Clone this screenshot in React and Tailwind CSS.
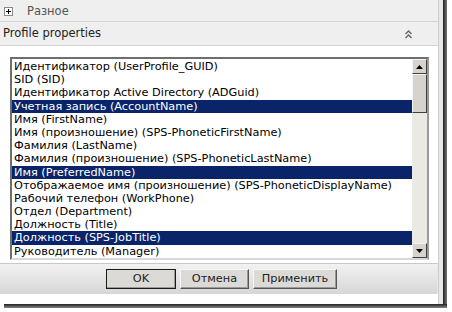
import React from 'react';

const items = [
    { label: 'Идентификатор (UserProfile_GUID)' },
    { label: 'SID (SID)' },
    { label: 'Идентификатор Active Directory (ADGuid)' },
    { label: 'Учетная запись (AccountName)', selected: true },
    { label: 'Имя (FirstName)' },
    { label: 'Имя (произношение) (SPS-PhoneticFirstName)' },
    { label: 'Фамилия (LastName)' },
    { label: 'Фамилия (произношение) (SPS-PhoneticLastName)' },
    { label: 'Имя (PreferredName)', selected: true },
    { label: 'Отображаемое имя (произношение) (SPS-PhoneticDisplayName)' },
    { label: 'Рабочий телефон (WorkPhone)' },
    { label: 'Отдел (Department)' },
    { label: 'Должность (Title)' },
    { label: 'Должность (SPS-JobTitle)', selected: true },
    { label: 'Руководитель (Manager)' },
];

const font = { fontFamily: '"DejaVu Sans", Verdana, sans-serif' };

const ScrollButton = ({ up }) => (
    <div className="w-[15px] h-[15px] bg-[#d6d3ce] border border-t-[#f4f4f4] border-l-[#f4f4f4] border-b-[#404040] border-r-[#404040] flex items-center justify-center">
        <svg width="7" height="4" viewBox="0 0 7 4">
            {up ? <path d="M3.5 0 L7 4 L0 4 Z" fill="#000" /> : <path d="M0 0 L7 0 L3.5 4 Z" fill="#000" />}
        </svg>
    </div>
);

const Btn = ({ children, primary, width }) => (
    <button
        className={`h-[20px] ${width} text-[11.3px] text-[#222] bg-[#dcdad6] border ${primary ? 'border-[#1a1a1a]' : 'border-t-[#f8f8f8] border-l-[#f8f8f8] border-b-[#555] border-r-[#555]'} shadow-[inset_-1px_-1px_0_#9a9a9a]`}
        style={font}
    >
        {children}
    </button>
);

export default function App() {
    return (
        <div className="w-[452px] h-[312px] bg-white overflow-hidden flex flex-col" style={font}>
            <div className="flex h-[304px]">
                <div className="w-[438px] flex flex-col bg-white">
                    {/* Разное */}
                    <div className="h-[22px] bg-[#efefef] border-b border-[#d4d4d4] flex items-center pl-[4px] pt-[2px]">
                        <div className="w-[9px] h-[9px] border border-[#888] bg-white flex items-center justify-center">
                            <svg width="5" height="5" viewBox="0 0 5 5"><path d="M0 2.5 H5 M2.5 0 V5" stroke="#000" strokeWidth="1" /></svg>
                        </div>
                        <span className="ml-[14px] text-[11.5px] text-[#555]">Разное</span>
                    </div>
                    {/* Profile properties */}
                    <div className="h-[24px] bg-[#efefef] border-b border-[#d4d4d4] flex items-center justify-between pl-[3px] pr-[26px] pt-[1px]">
                        <span className="text-[11.5px] text-[#222]">Profile properties</span>
                        <svg width="7" height="9" viewBox="0 0 7 9">
                            <path d="M0.5 4 L3.5 1 L6.5 4 M0.5 8 L3.5 5 L6.5 8" stroke="#666" strokeWidth="1.4" fill="none" />
                        </svg>
                    </div>
                    {/* list */}
                    <div className="pt-[11px] pl-[10px] pr-[9px]">
                        <div className="h-[203px] border-2 border-t-[#6e6e6e] border-l-[#6e6e6e] border-b-[#d8d8d8] border-r-[#9a9a9a] flex bg-white">
                            <div className="flex-1 pt-[1px] overflow-hidden">
                                {items.map((it, i) => (
                                    <div
                                        key={i}
                                        className={`h-[13.2px] leading-[13.2px] text-[11.3px] pl-[2px] whitespace-nowrap ${it.selected ? 'bg-[#0a246a] text-white' : 'text-black'}`}
                                    >
                                        {it.label}
                                    </div>
                                ))}
                            </div>
                            <div className="w-[15px] flex flex-col bg-[#ebe9e4]">
                                <ScrollButton up />
                                <div className="h-[39px] bg-[#d6d3ce] border border-t-[#f4f4f4] border-l-[#f4f4f4] border-b-[#404040] border-r-[#404040]" />
                                <div className="flex-1" />
                                <ScrollButton />
                            </div>
                        </div>
                    </div>
                    {/* buttons */}
                    <div className="h-[31px] mt-[3px] bg-gradient-to-b from-[#f2f2f2] to-[#d6d6d6] border-t border-[#c8c8c8] border-r border-r-[#e8e8e8] flex items-center pl-[106px] gap-[4px]">
                        <Btn primary width="w-[70px]">OK</Btn>
                        <Btn width="w-[69px]">Отмена</Btn>
                        <Btn width="w-[84px]">Применить</Btn>
                    </div>
                    <div className="flex-1" />
                </div>
                <div className="w-[5px] bg-[#e6e6e6] border-l border-[#cfcfcf]" />
                <div className="w-[4px] bg-gradient-to-r from-[#222] to-[#777]" />
                <div className="flex-1 bg-white" />
            </div>
            <div className="h-[4px] ml-[4px] mr-[5px] bg-gradient-to-b from-[#222] to-[#888]" />
            <div className="flex-1 bg-white" />
        </div>
    );
}
